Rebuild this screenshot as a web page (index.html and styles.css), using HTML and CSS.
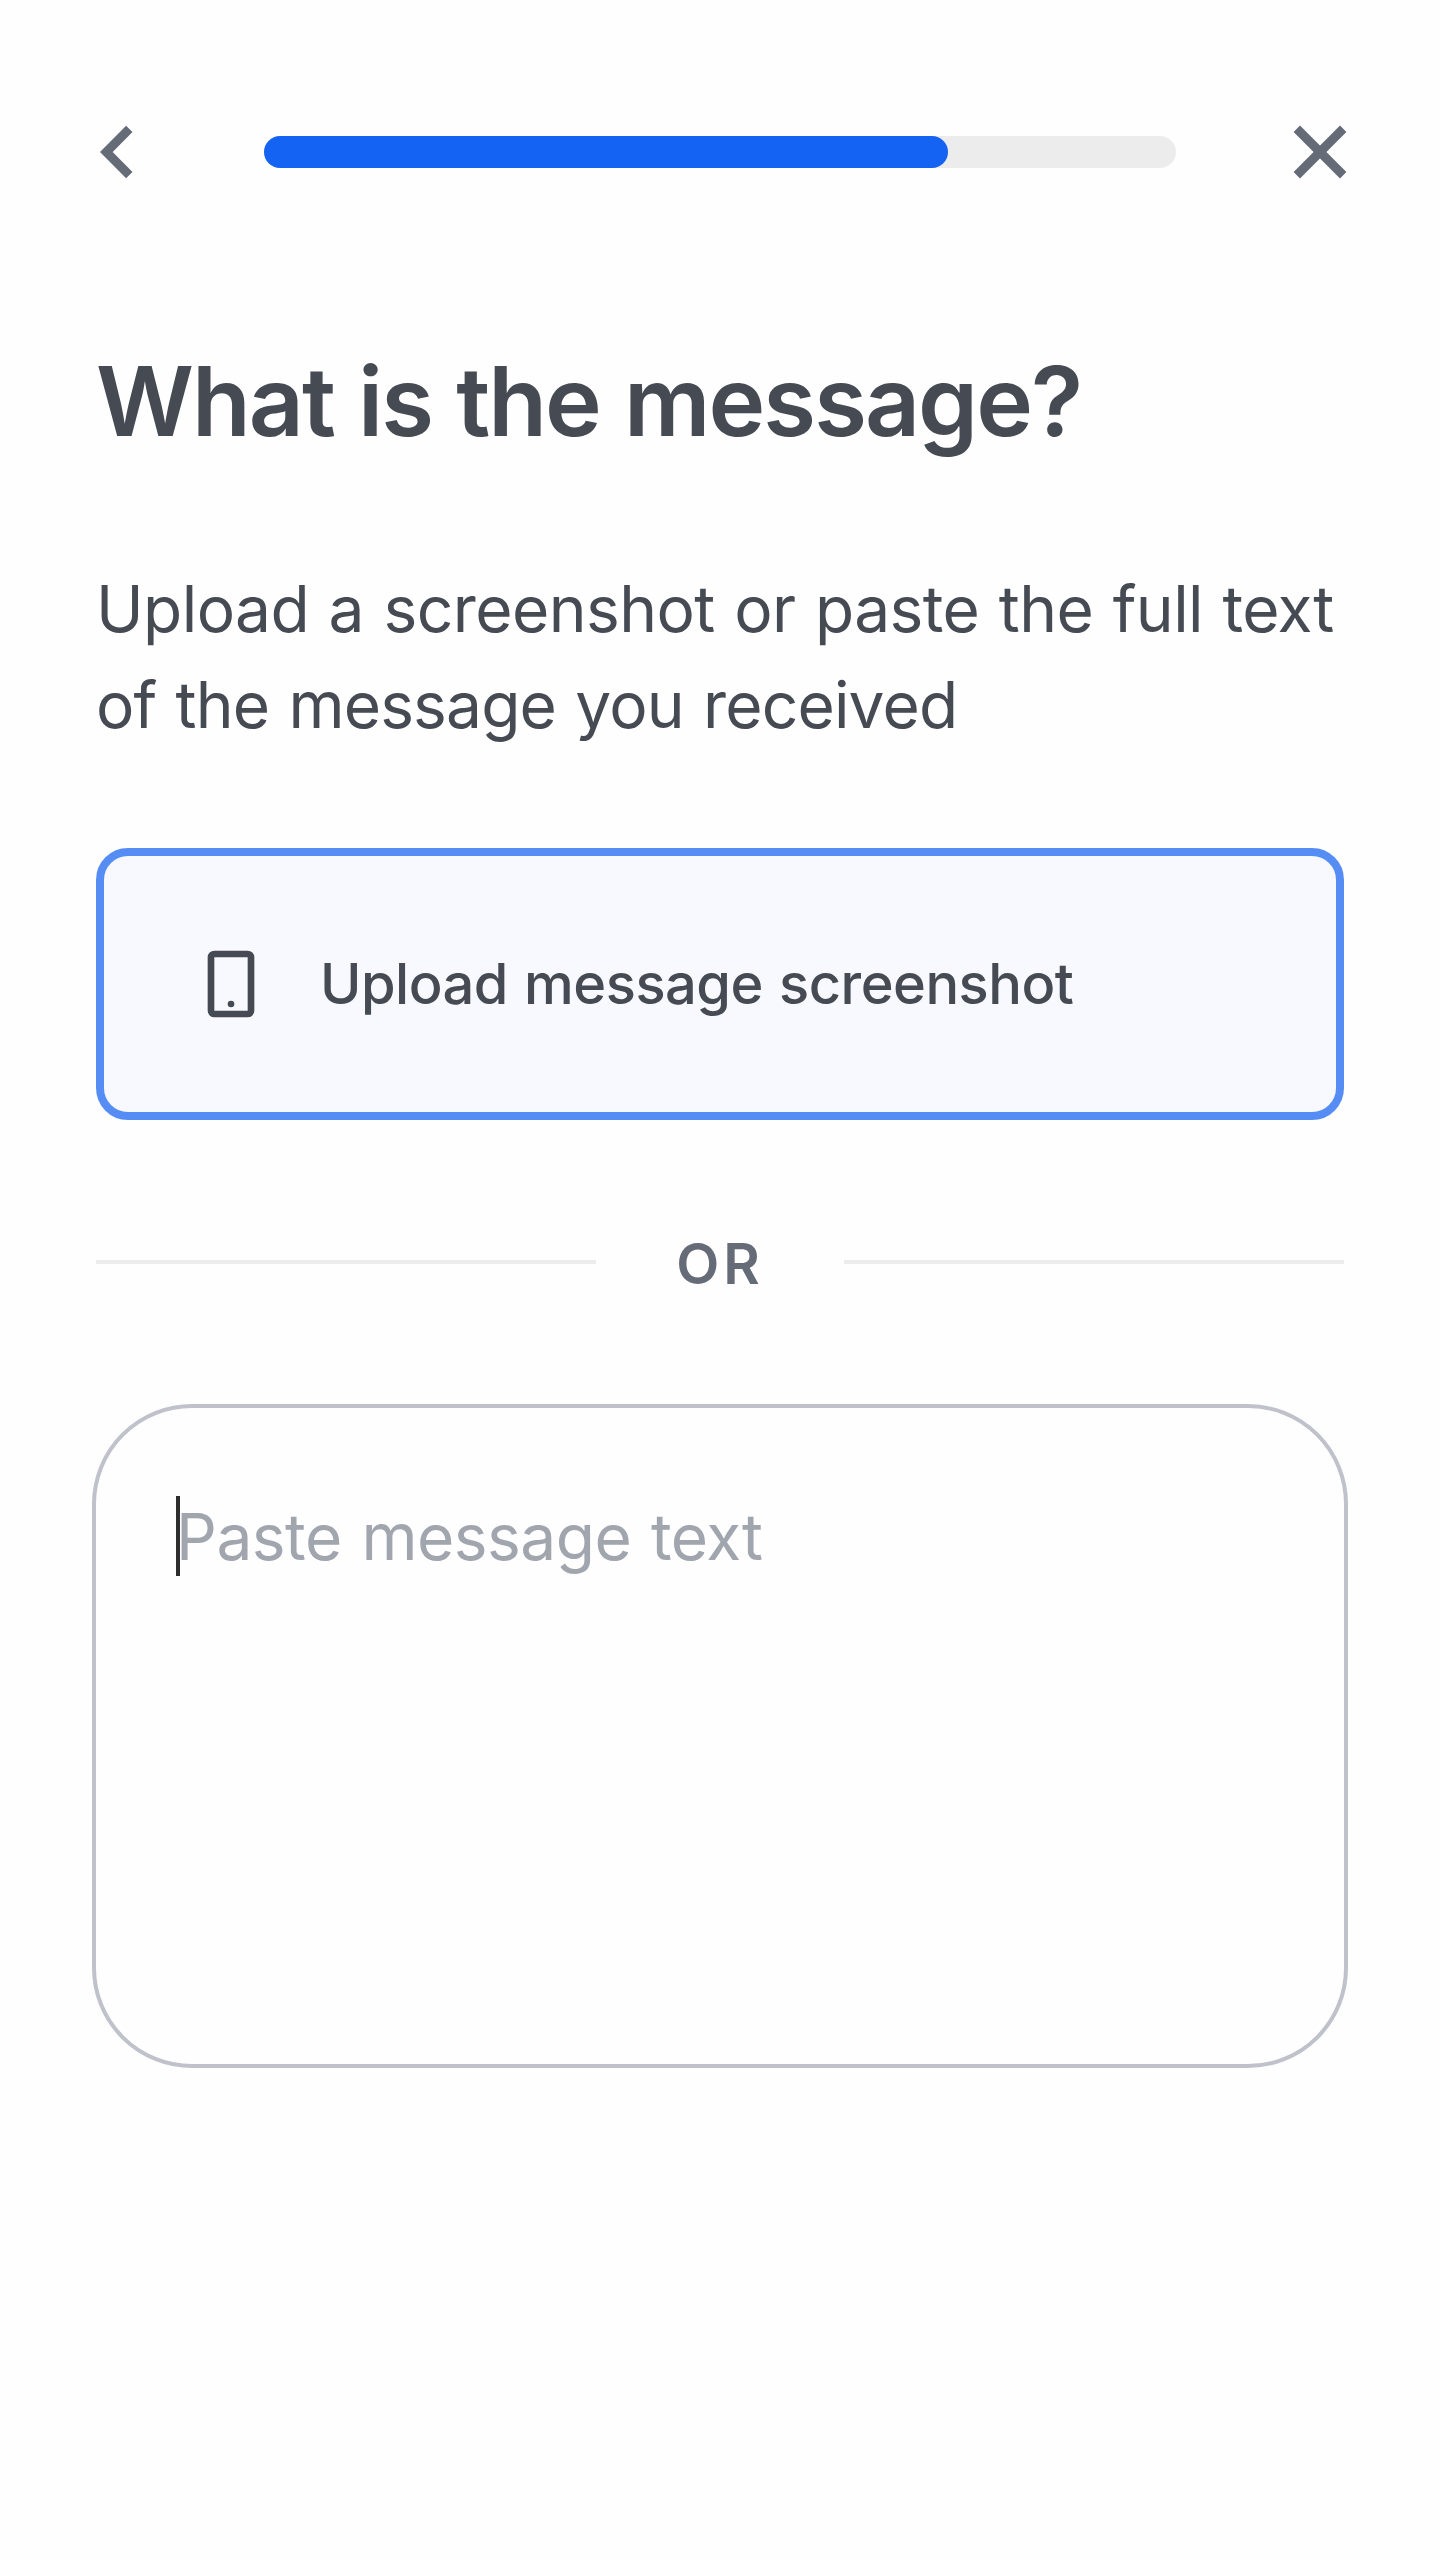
FILE: index.html
```html
<!DOCTYPE html>
<html lang="en">
<head>
<meta charset="utf-8">
<title>What is the message?</title>
<link rel="stylesheet" href="styles.css">
</head>
<body>
<main class="page">
  <header class="topbar">
    <svg class="back" viewBox="0 0 34 54" aria-label="Back"><path d="M29.3 3.8 6.3 27 29.3 50.2"/></svg>
    <div class="progress"><div class="progress-fill"></div></div>
    <svg class="close" viewBox="0 0 54 54" aria-label="Close"><path d="M3.8 3.8 50.2 50.2M50.2 3.8 3.8 50.2"/></svg>
  </header>
  <h1 class="title">What is the message?</h1>
  <p class="intro"><span class="intro-first">Upload a screenshot or paste the full text</span><br><span class="intro-second">of the message you received</span></p>
  <button class="upload">
    <svg class="phone" viewBox="0 0 24 24"><path fill-rule="evenodd" d="M7 2H17a2 2 0 0 1 2 2V20a2 2 0 0 1-2 2H7a2 2 0 0 1-2-2V4a2 2 0 0 1 2-2zM7 4V20H17V4z"/><circle cx="12" cy="18" r="1"/></svg>
    <span>Upload message screenshot</span>
  </button>
  <div class="divider"><span>OR</span></div>
  <div class="message"><span class="caret"></span><span class="placeholder">Paste message text</span></div>
</main>
</body>
</html>
```
FILE: styles.css
```css
* { box-sizing: border-box; }
body { margin: 0; background: #fefefe; font-family: Inter, sans-serif; color: #464a53; }
.page { height: 2560px; padding: 125px 92px 0; display: flex; flex-direction: column; }
.topbar { display: flex; align-items: center; height: 54px; padding: 0 0 0 8px; width: 1255px; }
.topbar svg { fill: none; stroke: #666b78; stroke-width: 9; }
.back { width: 34px; height: 54px; }
.close { width: 54px; height: 54px; margin-left: auto; }
.progress { width: 912px; height: 32px; margin-left: 130px; border-radius: 16px; background: #ececec; }
.progress-fill { width: 75%; height: 100%; border-radius: 16px; background: #1463f3; }
.title { margin: 162px 0 0 4px; font-size: 96px; line-height: 120px; font-weight: 600; letter-spacing: -1.95px; word-spacing: 1.9px; white-space: nowrap; }
.intro { margin: 100px 0 0 4px; font-size: 64px; line-height: 96px; word-spacing: 2px; white-space: nowrap; }
.intro-first { letter-spacing: -0.55px; }
.intro-second { letter-spacing: -0.82px; }
.upload { margin: 95px 0 0 4px; width: 1248px; height: 272px; padding: 0 0 0 87px; display: flex; align-items: center; gap: 49px; border: 8px solid #568df5; border-radius: 32px; background: #f8f9fe; font: 500 56px/80px Inter, sans-serif; letter-spacing: -0.5px; word-spacing: 1.7px; color: inherit; }
.phone { width: 80px; height: 80px; fill: #464a53; }
.divider { width: 1248px; margin: 100px 0 0 4px; height: 84px; display: flex; align-items: center; gap: 80px; font-size: 56px; font-weight: 600; letter-spacing: 4px; color: #666b78; }
.divider span { padding-top: 4px; }
.divider::before, .divider::after { content: ""; flex: 1; height: 4px; background: #ececec; }
.message { width: 1256px; height: 664px; margin-top: 100px; padding: 88px 80px; display: flex; align-items: flex-start; border: 4px solid #bfc2cb; border-radius: 100px; }
.caret { width: 4px; height: 80px; margin-right: -4px; background: #2e2e2e; }
.placeholder { font-size: 64px; line-height: 82px; letter-spacing: -0.5px; word-spacing: 2.2px; color: #a0a5ae; }
```
